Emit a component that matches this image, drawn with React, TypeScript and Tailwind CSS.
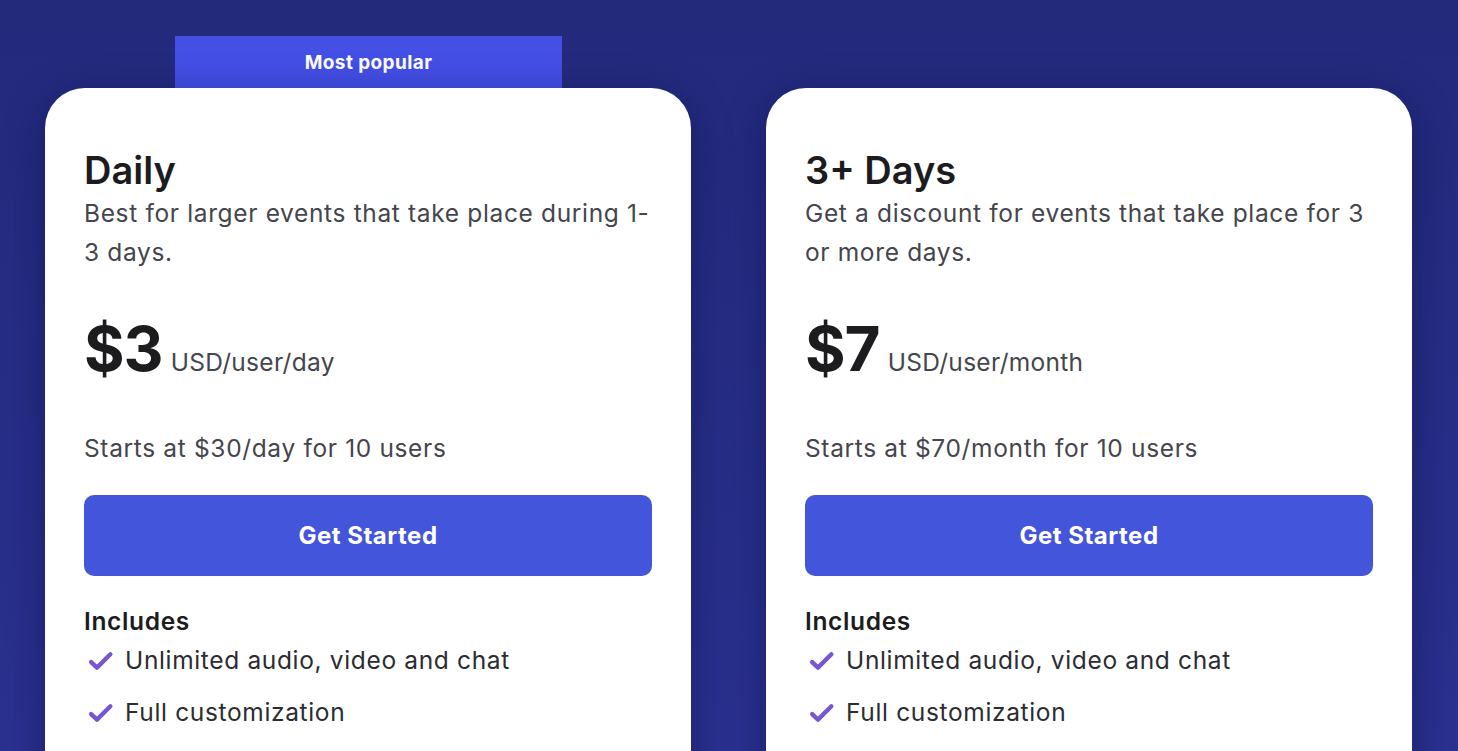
const features = ["Unlimited audio, video and chat", "Full customization"];

function Check() {
  return (
    <svg viewBox="0 0 26 24" className="w-[27px] h-[25px] shrink-0 ml-[3px]" fill="none">
      <path d="M4 13.5l5.6 5.4L22.5 6" stroke="#7657cf" strokeWidth="4.2" strokeLinecap="round" strokeLinejoin="round" />
    </svg>
  );
}

type Plan = {
  title: string;
  desc: string[];
  price: string;
  unit: string;
  starts: string;
};

const body = "text-[24.5px] tracking-[0.65px]";

function PlanCard({ plan }: { plan: Plan }) {
  return (
    <div className="w-[646px] h-[720px] bg-white rounded-[40px] px-[39px] pt-[60px] shadow-[0_10px_40px_rgba(10,12,60,0.45)]">
      <h2 className="text-[38px] leading-[44px] font-semibold text-[#1c1c1f]">{plan.title}</h2>
      <p className={`${body} leading-[39px] text-[#45454d] mt-[2px] whitespace-nowrap`}>
        {plan.desc[0]}
        <br />
        {plan.desc[1]}
      </p>
      <div className="flex items-baseline gap-[8px] mt-[42px]">
        <span className="text-[62px] leading-[70px] font-bold text-[#1c1c1f] tracking-[-1px]">{plan.price}</span>
        <span className="text-[24.5px] tracking-[0.3px] text-[#45454d]">{plan.unit}</span>
      </div>
      <p className={`${body} leading-[32px] text-[#45454d] mt-[48px]`}>{plan.starts}</p>
      <button className="mt-[31px] w-full h-[81px] rounded-[10px] bg-[#4355db] text-white text-[24px] tracking-[0.5px] font-bold">
        Get Started
      </button>
      <h3 className={`mt-[29px] ${body} leading-[32px] font-semibold text-[#1c1c1f]`}>Includes</h3>
      <ul className="mt-[7px] flex flex-col gap-[20px]">
        {features.map((f) => (
          <li key={f} className={`flex items-center gap-[11px] ${body} leading-[32px] text-[#2c2c33]`}>
            <Check />
            {f}
          </li>
        ))}
      </ul>
    </div>
  );
}

export default function App() {
  const daily: Plan = {
    title: "Daily",
    desc: ["Best for larger events that take place during 1-", "3 days."],
    price: "$3",
    unit: "USD/user/day",
    starts: "Starts at $30/day for 10 users",
  };
  const multi: Plan = {
    title: "3+ Days",
    desc: ["Get a discount for events that take place for 3", "or more days."],
    price: "$7",
    unit: "USD/user/month",
    starts: "Starts at $70/month for 10 users",
  };

  return (
    <div
      className="w-[1458px] h-[751px] overflow-hidden bg-gradient-to-b from-[#232a7c] to-[#2a3190]"
      style={{ fontFamily: "Inter, 'Open Sans', sans-serif" }}
    >
      <div className="flex gap-[75px] pl-[45px] pt-[36px]">
        <div className="flex flex-col">
          <div className="ml-[130px] w-[387px] h-[52px] pt-[3px] bg-[#444fe5] flex items-center justify-center text-white text-[19px] tracking-[0.4px] font-bold">
            Most popular
          </div>
          <PlanCard plan={daily} />
        </div>
        <div className="pt-[52px]">
          <PlanCard plan={multi} />
        </div>
      </div>
    </div>
  );
}
